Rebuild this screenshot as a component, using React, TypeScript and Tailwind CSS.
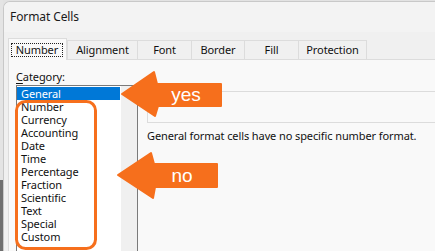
import React from "react";

const items = [
  "General",
  "Number",
  "Currency",
  "Accounting",
  "Date",
  "Time",
  "Percentage",
  "Fraction",
  "Scientific",
  "Text",
  "Special",
  "Custom",
];

const tabs = [
  { label: "Alignment", w: "w-[70px]" },
  { label: "Font", w: "w-[54px]" },
  { label: "Border", w: "w-[53px]" },
  { label: "Fill", w: "w-[54px]" },
  { label: "Protection", w: "w-[69px]" },
];

export default function App() {
  return (
    <div className="relative w-[435px] h-[251px] overflow-hidden bg-[#e2e2e2] flex font-['Noto_Sans',sans-serif] text-[11px] tracking-[-0.1px] text-[#111]">
      <div className="w-[3px] shrink-0 flex flex-col">
        <div className="h-[180px] bg-[#e4e4e4]" />
        <div className="flex-1 bg-[#6f6f6f]" />
      </div>
      <div className="flex-1 mt-[1px] rounded-tl-[7px] border-l border-t border-[#c8c8c8] bg-[#f0f0f0] flex flex-col overflow-hidden">
        <div className="h-[30px] shrink-0 bg-[#f3f3f3] flex items-center pl-[6px] text-[12px] text-[#1a1a1a]">
          Format Cells
        </div>
        <div className="flex-1 flex flex-col pl-[4px] pt-[6px]">
          <div className="h-[21px] flex items-end shrink-0">
            <div className="relative z-10 h-[22px] -mb-[1px] w-[59px] bg-[#f9f9f9] border-l border-t border-r border-[#dcdcdc] flex items-start pt-[4px] pl-[2px]">
              <span className="w-[52px] h-[14px] border border-dotted border-[#222] flex items-center justify-center leading-[12px]">
                Number
              </span>
            </div>
            {tabs.map((t, i) => (
              <div
                key={t.label}
                className={`h-[19px] ${t.w} border-t border-l border-[#dcdcdc] ${
                  i === tabs.length - 1 ? "border-r" : ""
                } flex items-center justify-center leading-[14px]`}
              >
                {t.label}
              </div>
            ))}
          </div>
          <div className="flex-1 bg-[#f9f9f9] border-l border-t border-[#dcdcdc] flex pl-[7px] pt-[9px]">
            <div className="w-[122px] shrink-0 flex flex-col">
              <div className="leading-[15px] h-[15px]">
                <span className="underline underline-offset-[2px]">C</span>ategory:
              </div>
              <div className="mt-[1px] flex-1 border-l border-t border-r border-[#7a7a7a] flex">
                <div className="flex-1 bg-white pt-[1px] flex flex-col">
                  {items.map((it, i) => (
                    <div
                      key={it}
                      className={`h-[13px] leading-[13px] pl-[4px] mr-[1px] ${
                        i === 0 ? "bg-[#0078d7] text-white" : "text-[#111]"
                      }`}
                    >
                      {it}
                    </div>
                  ))}
                </div>
                <div className="w-[16px] bg-[#f0f0f0]" />
              </div>
            </div>
            <div className="flex-1 ml-[9px] flex flex-col pt-[22px]">
              <div className="h-[32px] border-t border-b border-l border-[#dcdcdc]" />
              <div className="mt-[5px] leading-[15px] whitespace-nowrap">
                General format cells have no specific number format.
              </div>
            </div>
          </div>
        </div>
      </div>

      <svg
        className="absolute inset-0 pointer-events-none"
        width="435"
        height="251"
        viewBox="0 0 435 251"
      >
        <rect
          x="16.5"
          y="101.5"
          width="79"
          height="147"
          rx="9"
          fill="none"
          stroke="#f66f1c"
          strokeWidth="3"
        />
        <path
          d="M122,94 L154,72 L157,84 L221,84 L221,106 L158,106 L155,116 Z"
          fill="#f66f1c"
          stroke="#f66f1c"
          strokeWidth="2"
          strokeLinejoin="round"
        />
        <path
          d="M118,175 L151,153 L154,164 L217,164 L217,187 L155,187 L153,198 Z"
          fill="#f66f1c"
          stroke="#f66f1c"
          strokeWidth="2"
          strokeLinejoin="round"
        />
        <text
          x="186"
          y="101"
          textAnchor="middle"
          fill="#ffffff"
          fontSize="19"
          fontFamily="'Liberation Sans', Arial, sans-serif"
        >
          yes
        </text>
        <text
          x="182"
          y="182"
          textAnchor="middle"
          fill="#ffffff"
          fontSize="19"
          fontFamily="'Liberation Sans', Arial, sans-serif"
        >
          no
        </text>
      </svg>
    </div>
  );
}
